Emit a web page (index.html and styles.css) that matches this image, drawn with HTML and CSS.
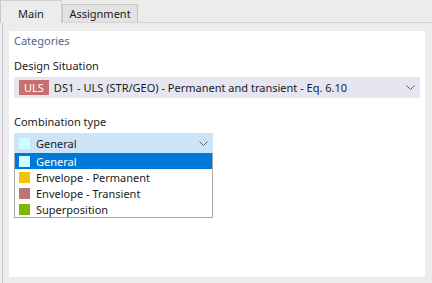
FILE: index.html
```html
<!DOCTYPE html>
<html lang="en">
<head>
  <meta charset="UTF-8">
  <link rel="stylesheet" href="styles.css">
  <title>Combination</title>
</head>
<body>

<div class="window">
  <div class="tabs">
    <div class="tab active">Main</div>
    <div class="tab">Assignment</div>
  </div>

  <div class="page">
    <div class="panel">
      <div class="group-title">Categories</div>

      <div class="label">Design Situation</div>
      <div class="select wide">
        <span class="badge">ULS</span>
        <span class="select-text">DS1 - ULS (STR/GEO) - Permanent and transient - Eq. 6.10</span>
        <svg class="chevron" width="9" height="5" viewBox="0 0 9 5"><path d="M0.5 0.5 L4.5 4.5 L8.5 0.5" fill="none" stroke="#606060" stroke-width="1"/></svg>
      </div>

      <div class="label spaced">Combination type</div>
      <div class="combo">
        <div class="select open">
          <span class="swatch general"></span>
          <span class="select-text">General</span>
          <svg class="chevron" width="9" height="5" viewBox="0 0 9 5"><path d="M0.5 0.5 L4.5 4.5 L8.5 0.5" fill="none" stroke="#606060" stroke-width="1"/></svg>
        </div>
        <ul class="options">
          <li class="option selected"><span class="swatch general"></span>General</li>
          <li class="option"><span class="swatch permanent"></span>Envelope - Permanent</li>
          <li class="option"><span class="swatch transient"></span>Envelope - Transient</li>
          <li class="option"><span class="swatch superposition"></span>Superposition</li>
        </ul>
      </div>
    </div>
  </div>
</div>

</body>
</html>
```

FILE: styles.css
```css
body {
  margin: 0;
  padding: 0;
  background-color: #ececec;
  font-family: "Noto Sans", "Open Sans", sans-serif;
  font-size: 11px;
  color: #1a1a1a;
}

.window {
  width: 432px;
  height: 283px;
  overflow: hidden;
}

.tabs {
  display: flex;
  align-items: flex-end;
  height: 22px;
  border-bottom: 1px solid #d4d4d4;
}

.tab {
  width: 76px;
  height: 18px;
  line-height: 18px;
  text-align: center;
  background-color: #e2e2e2;
  border: 1px solid #c6c6c6;
  border-bottom: none;
  box-sizing: border-box;
}

.tab.active {
  width: 62px;
  height: 23px;
  line-height: 26px;
  margin-bottom: -1px;
  background-color: #ececec;
  border-color: #d0d0d0;
  border-left-color: #c8c8d2;
}

.page {
  height: 260px;
  margin-left: 2px;
  padding: 8px 7px 6px 6px;
  border-left: 1px solid #c8c8d2;
  box-sizing: border-box;
}

.panel {
  height: 100%;
  background-color: #fff;
  padding: 2px 5px 0 5px;
  box-sizing: border-box;
}

.group-title {
  line-height: 16px;
  color: #52648e;
  margin-bottom: 9px;
}

.label {
  line-height: 16px;
  margin-bottom: 3px;
}

.label.spaced {
  margin-top: 16px;
}

.select {
  display: flex;
  align-items: center;
  height: 21px;
  padding: 0 5px;
  background-color: #e6e6f2;
  box-sizing: border-box;
}

.select-text {
  flex: 1;
  white-space: nowrap;
}

.badge {
  background-color: #c86f6f;
  color: #fff;
  padding: 0 5px;
  height: 15px;
  line-height: 15px;
  margin-right: 5px;
}

.combo {
  position: relative;
  width: 199px;
}

.select.open {
  height: 20px;
  background-color: #cce4f7;
}

.options {
  position: absolute;
  left: 0;
  right: 0;
  top: 20px;
  margin: 0;
  padding: 0;
  list-style: none;
  background-color: #fff;
  border: 1px solid #a8a8a8;
  border-top: none;
}

.option {
  display: flex;
  align-items: center;
  height: 16px;
  padding-left: 4px;
}

.option.selected {
  background-color: #0078d7;
  color: #fff;
}

.swatch {
  width: 11px;
  height: 11px;
  margin-right: 6px;
  flex-shrink: 0;
}

.swatch.general { background-color: #ccffff; }
.swatch.permanent { background-color: #f5c400; }
.swatch.transient { background-color: #bd7575; }
.swatch.superposition { background-color: #80b800; }
```
